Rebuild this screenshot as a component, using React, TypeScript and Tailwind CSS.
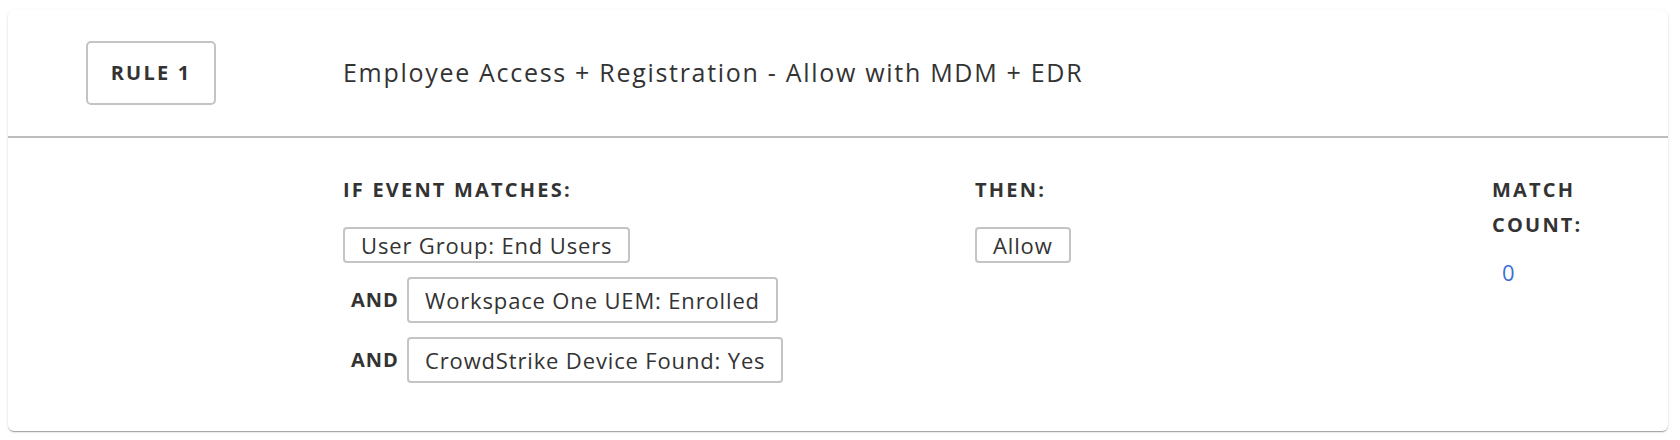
import React from "react";

const font = { fontFamily: '"Open Sans", "Noto Sans", sans-serif' };

const Chip = ({ label, tall }: { label: string; tall?: boolean }) => (
  <div
    className={
      "inline-flex items-center rounded-[4px] border-2 border-[#c4c4c4] bg-white px-[16px] text-[22px] tracking-[0.85px] text-[#333] " +
      (tall ? "h-[46px]" : "h-[36px]")
    }
  >
    {label}
  </div>
);

const Heading = ({ children }: { children: React.ReactNode }) => (
  <div className="text-[20px] font-bold uppercase leading-[35px] tracking-[2.2px] text-[#333]">{children}</div>
);

export default function App() {
  const conditions = ["Workspace One UEM: Enrolled", "CrowdStrike Device Found: Yes"];

  return (
    <div className="min-h-screen bg-white pt-[10px] pr-[12px] pb-[10px] pl-[8px]" style={font}>
      <div className="w-full rounded-[6px] bg-white shadow-[0_2px_1px_-1px_rgba(0,0,0,0.2),0_1px_1px_0_rgba(0,0,0,0.14),0_1px_3px_0_rgba(0,0,0,0.12)]">
        {/* header */}
        <div className="flex h-[128px] items-center border-b-2 border-[#bdbdbd]">
          <div className="w-[335px] pl-[78px]">
            <div className="flex h-[64px] w-[130px] items-center justify-center rounded-[5px] border-2 border-[#c4c4c4] text-[20px] font-bold tracking-[2.2px] text-[#333]">
              RULE 1
            </div>
          </div>
          <div className="text-[25px] tracking-[1.7px] text-[#333]">Employee Access + Registration - Allow with MDM + EDR</div>
        </div>

        {/* body */}
        <div className="flex pt-[34px] pb-[48px] pl-[335px]">
          <div className="w-[632px]">
            <Heading>If event matches:</Heading>
            <div className="mt-[20px] flex flex-col gap-[14px]">
              <div>
                <Chip label="User Group: End Users" />
              </div>
              {conditions.map((c) => (
                <div key={c} className="flex items-center">
                  <span className="w-[64px] pl-[8px] text-[20px] font-bold tracking-[1px] text-[#333]">AND</span>
                  <Chip label={c} tall />
                </div>
              ))}
            </div>
          </div>
          <div className="w-[517px]">
            <Heading>Then:</Heading>
            <div className="mt-[20px]">
              <Chip label="Allow" />
            </div>
          </div>
          <div className="w-[110px]">
            <Heading>
              Match
              <br />
              Count:
            </Heading>
            <div className="mt-[15px] pl-[10px] text-[22px] leading-[30px] text-[#3f6fd6]">0</div>
          </div>
        </div>
      </div>
    </div>
  );
}
